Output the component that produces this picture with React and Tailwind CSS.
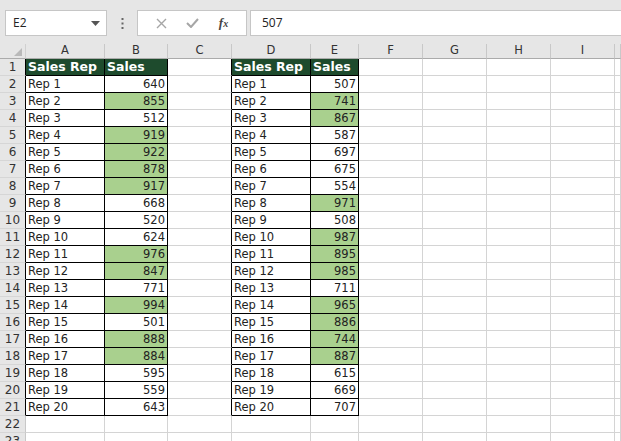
import React from 'react';

const COLS = ['A', 'B', 'C', 'D', 'E', 'F', 'G', 'H', 'I', ''];

const salesB = [640, 855, 512, 919, 922, 878, 917, 668, 520, 624, 976, 847, 771, 994, 501, 888, 884, 595, 559, 643];
const greenB = [855, 919, 922, 878, 917, 976, 847, 994, 888, 884];
const salesE = [507, 741, 867, 587, 697, 675, 554, 971, 508, 987, 895, 985, 711, 965, 886, 744, 887, 615, 669, 707];
const greenE = [741, 867, 971, 987, 895, 985, 965, 886, 744, 887];

const font = { fontFamily: '"DejaVu Sans", Verdana, sans-serif' };

function cellContent(r, c) {
    // c: 0 = A ... 9 = J
    if (r === 1) {
        if (c === 0 || c === 3) return { text: 'Sales Rep', head: true };
        if (c === 1 || c === 4) return { text: 'Sales', head: true };
        return null;
    }
    if (r > 21) return null;
    const i = r - 2;
    if (c === 0 || c === 3) return { text: `Rep ${i + 1}` };
    if (c === 1) return { text: salesB[i], num: true, green: greenB.includes(salesB[i]) };
    if (c === 4) return { text: salesE[i], num: true, green: greenE.includes(salesE[i]) };
    return null;
}

function inTable(r, c) {
    return r <= 21 && (c === 0 || c === 1 || c === 3 || c === 4);
}

export default function App() {
    const rows = Array.from({ length: 23 }, (_, i) => i + 1);

    return (
        <div className="w-[621px] h-[441px] overflow-hidden bg-white text-[#222]" style={font}>
            {/* formula bar */}
            <div className="h-[44px] bg-[#e6e6e6] pt-[10px] flex">
                <div className="ml-[5px] w-[102px] h-[26px] bg-white border border-[#c6c6c6] flex items-center justify-between pl-[7px] pr-[6px]">
                    <span className="text-[12px]" style={{ fontFamily: '"Open Sans", sans-serif' }}>E2</span>
                    <svg width="9" height="5" viewBox="0 0 9 5"><path d="M0 0h9L4.5 5z" fill="#555" /></svg>
                </div>
                <div className="w-[30px] h-[26px] flex items-center justify-center">
                    <svg width="3" height="11" viewBox="0 0 3 11">
                        <rect x="0.5" y="0" width="2" height="2" fill="#666" />
                        <rect x="0.5" y="4.5" width="2" height="2" fill="#666" />
                        <rect x="0.5" y="9" width="2" height="2" fill="#666" />
                    </svg>
                </div>
                <div className="w-[110px] h-[26px] bg-white border border-[#c6c6c6] flex items-center justify-around px-[8px]">
                    <svg width="11" height="11" viewBox="0 0 11 11"><path d="M1 1l9 9M10 1l-9 9" stroke="#a6a6a6" strokeWidth="1.4" /></svg>
                    <svg width="13" height="10" viewBox="0 0 13 10"><path d="M1 5l4 4 7-8" stroke="#a6a6a6" strokeWidth="2" fill="none" /></svg>
                    <span className="text-[13px] italic text-[#444] font-semibold" style={{ fontFamily: '"Liberation Serif", serif' }}>f<span className="text-[10px]">x</span></span>
                </div>
                <div className="ml-[3px] flex-1 h-[26px] bg-white border-y border-l border-[#c6c6c6] flex items-center pl-[11px]">
                    <span className="text-[12px]" style={{ fontFamily: '"Open Sans", sans-serif' }}>507</span>
                </div>
            </div>

            {/* sheet */}
            <div className="grid grid-cols-[26px_79px_63px_64px_79px_48px_64px_64px_64px_64px_1fr] auto-rows-[17px] grid-rows-[15px]">
                {/* column headers */}
                <div className="relative bg-[#e6e6e6] border-b border-[#ababab] border-r border-r-[#d0d0d0]">
                    <svg className="absolute right-[3px] bottom-[2px]" width="8" height="8" viewBox="0 0 8 8"><path d="M8 0v8H0z" fill="#b9b9b9" /></svg>
                </div>
                {COLS.map((l, c) => (
                    <div key={l + c} className="bg-[#e6e6e6] border-b border-[#ababab] border-r border-r-[#c8c8c8] flex items-center justify-center text-[11.5px] text-[#333]">
                        {l}
                    </div>
                ))}

                {rows.map((r) => (
                    <React.Fragment key={r}>
                        <div className={`bg-[#e6e6e6] border-b border-[#d6d6d6] border-r ${r <= 21 ? 'border-r-black' : 'border-r-[#c8c8c8]'} flex items-end justify-center pb-[2px] leading-none text-[12px] text-[#333]`}>
                            {r}
                        </div>
                        {COLS.map((_, c) => {
                            const cell = cellContent(r, c);
                            const t = inTable(r, c);
                            const rightBlack = t || (r <= 21 && c === 2);
                            const bg = cell?.head ? 'bg-[#1e4b2d] text-white font-bold text-[12.5px]' : cell?.green ? 'bg-[#a9d08e] text-[11.5px]' : 'bg-white text-[11.5px]';
                            return (
                                <div
                                    key={c}
                                    className={`${bg} border-r border-b ${rightBlack ? 'border-r-black' : 'border-r-[#d4d4d4]'} ${t ? 'border-b-black' : 'border-b-[#d4d4d4]'} flex items-end pb-[2px] px-[2px] leading-none whitespace-nowrap overflow-hidden ${cell?.num ? 'justify-end' : 'justify-start'}`}
                                >
                                    {cell ? cell.text : ''}
                                </div>
                            );
                        })}
                    </React.Fragment>
                ))}
            </div>
        </div>
    );
}
